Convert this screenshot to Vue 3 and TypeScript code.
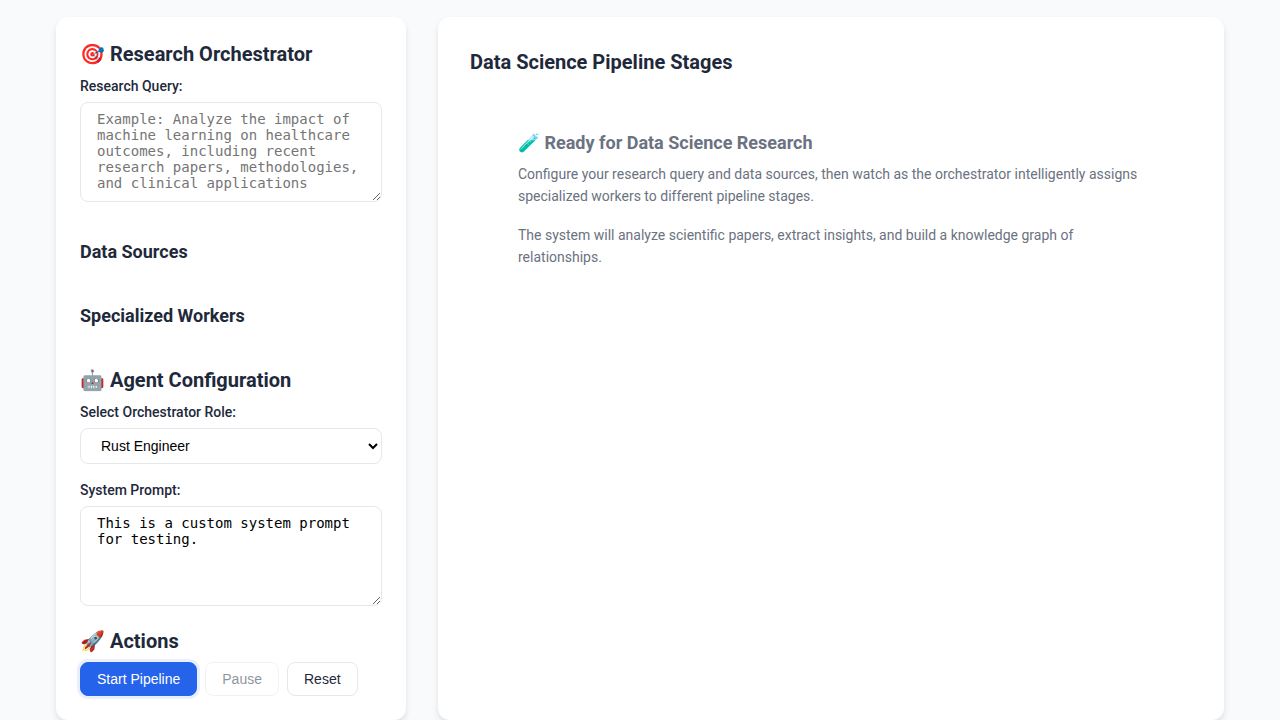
<script setup lang="ts">
import { ref } from 'vue'

const query = ref('')
const role = ref('Rust Engineer')
const prompt = ref('This is a custom system prompt for testing.')
const running = ref(false)
const reset = () => {
  query.value = ''
  running.value = false
}
</script>

<template>
  <main class="layout">
    <aside class="panel sidebar">
      <section>
        <h2>🎯 Research Orchestrator</h2>
        <label for="query">Research Query:</label>
        <textarea id="query" v-model="query" placeholder="Example: Analyze the impact of machine learning on healthcare outcomes, including recent research papers, methodologies, and clinical applications"></textarea>
      </section>
      <section class="sub"><h3>Data Sources</h3></section>
      <section class="sub"><h3>Specialized Workers</h3></section>
      <section class="config">
        <h2>🤖 Agent Configuration</h2>
        <label for="role">Select Orchestrator Role:</label>
        <select id="role" v-model="role">
          <option>Rust Engineer</option>
        </select>
        <label for="prompt">System Prompt:</label>
        <textarea id="prompt" v-model="prompt"></textarea>
      </section>
      <section>
        <h2>🚀 Actions</h2>
        <div class="buttons">
          <button type="button" class="primary" @click="running = true">Start Pipeline</button>
          <button type="button" :disabled="!running" @click="running = false">Pause</button>
          <button type="button" @click="reset">Reset</button>
        </div>
      </section>
    </aside>
    <section class="panel stages">
      <h2>Data Science Pipeline Stages</h2>
      <div class="empty">
        <h3>🧪 Ready for Data Science Research</h3>
        <p>Configure your research query and data sources, then watch as the orchestrator intelligently assigns specialized workers to different pipeline stages.</p>
        <p>The system will analyze scientific papers, extract insights, and build a knowledge graph of relationships.</p>
      </div>
    </section>
  </main>
</template>

<style>
body {
  margin: 0;
  background: #f8fafc;
}
</style>

<style scoped>
* {
  box-sizing: border-box;
}
.layout {
  display: grid;
  grid-template-columns: 350px 1fr;
  gap: 32px;
  padding: 17px 56px 0;
  font-family: Roboto, sans-serif;
  font-size: 14px;
  line-height: 22px;
  color: #1e293b;
}
.panel {
  background: #fff;
  border-radius: 12px;
  box-shadow: 0 4px 6px rgba(0, 0, 0, 0.1);
}
.sidebar {
  padding: 24px;
}
.stages {
  padding: 32px;
}
h2 {
  margin: 0 0 8px;
  font-size: 20px;
  line-height: 26px;
  font-weight: 700;
}
h3 {
  margin: 0;
  font-size: 18px;
  line-height: 24px;
  font-weight: 700;
}
label {
  display: block;
  margin-bottom: 5px;
  line-height: 22px;
  font-weight: 500;
}
textarea,
select {
  display: block;
  width: 100%;
  border: 1px solid #e5e7eb;
  border-radius: 8px;
  background: #fff;
  color: #000;
  font-size: 14px;
}
textarea {
  height: 100px;
  margin-bottom: 22px;
  padding: 8px 16px;
  font-family: "DejaVu Sans Mono", monospace;
  line-height: 16px;
  resize: vertical;
}
select {
  height: 36px;
  margin-bottom: 15px;
  padding: 8px 16px;
  font-family: "Liberation Sans", Arial, sans-serif;
}
.sub {
  padding: 16px 0 24px;
}
.config {
  padding-top: 15px;
}
.buttons {
  display: flex;
  gap: 8px;
}
button {
  height: 34px;
  padding: 8px 16px;
  border: 1px solid #e5e7eb;
  border-radius: 8px;
  background: #fff;
  color: #1e293b;
  font-family: "Liberation Sans", Arial, sans-serif;
  font-size: 14px;
  line-height: 16px;
}
button:disabled {
  opacity: 0.5;
}
.primary {
  border-color: #2563eb;
  background: #2563eb;
  color: #fff;
  box-shadow: 0 0 0 3px rgba(37, 99, 235, 0.1);
}
.empty {
  padding: 48px;
  color: #6b7280;
}
.empty h3 {
  margin-bottom: 8px;
}
p {
  margin: 0 0 17px;
}
</style>
